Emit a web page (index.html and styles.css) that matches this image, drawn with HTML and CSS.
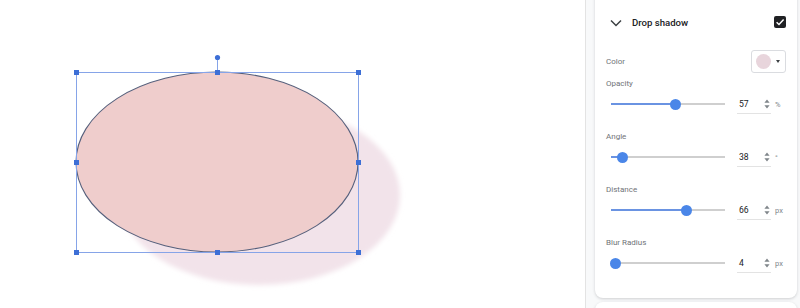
FILE: index.html
```html
<!DOCTYPE html>
<html>
<head>
<meta charset="utf-8">
<link rel="stylesheet" href="styles.css">
</head>
<body>
<div class="app">
  <div class="canvas">
    <svg class="stage" width="585" height="308" viewBox="0 0 585 308">
      <defs>
        <filter id="blur" x="-20%" y="-20%" width="140%" height="140%">
          <feGaussianBlur stdDeviation="2.5"/>
        </filter>
      </defs>
      <ellipse cx="259" cy="195" rx="141" ry="90" fill="#f2e3ea" filter="url(#blur)"/>
      <ellipse cx="217" cy="162" rx="141" ry="90" fill="#efcdcc" stroke="#56607c" stroke-width="1.1"/>
      <rect x="76.5" y="72.5" width="282" height="180" fill="none" stroke="#86a4e8" stroke-width="1"/>
      <line x1="217.5" y1="57" x2="217.5" y2="72" stroke="#86a4e8" stroke-width="1"/>
      <circle cx="217.5" cy="57.5" r="2.6" fill="#3d6fd6"/>
      <g fill="#3d6fd6">
        <rect x="74" y="70" width="5" height="5"/>
        <rect x="215" y="70" width="5" height="5"/>
        <rect x="356" y="70" width="5" height="5"/>
        <rect x="74" y="160" width="5" height="5"/>
        <rect x="356" y="160" width="5" height="5"/>
        <rect x="74" y="250" width="5" height="5"/>
        <rect x="215" y="250" width="5" height="5"/>
        <rect x="356" y="250" width="5" height="5"/>
      </g>
    </svg>
  </div>
  <div class="panel">
    <div class="card">
      <div class="header">
        <svg class="chevron" width="12" height="8" viewBox="0 0 12 8"><path d="M1 1.5 L6 6.5 L11 1.5" fill="none" stroke="#3c4043" stroke-width="1.5"/></svg>
        <span class="title">Drop shadow</span>
        <span class="checkbox"><svg width="12" height="12" viewBox="0 0 12 12"><path d="M2.6 6.2 L5 8.5 L9.6 3.6" fill="none" stroke="#ffffff" stroke-width="1.5"/></svg></span>
      </div>
      <div class="color-row">
        <span class="label">Color</span>
        <span class="color-btn"><span class="swatch"></span><span class="caret"></span></span>
      </div>

      <div class="group">
        <div class="label">Opacity</div>
        <div class="ctrl">
          <div class="slider"><div class="track"></div><div class="fill" style="width:57%"></div><div class="thumb" style="left:57%"></div></div>
          <div class="num"><span>57</span><svg class="spin" width="6" height="10" viewBox="0 0 6 10"><path d="M3 0.5 L5.6 3.8 L0.4 3.8 Z M3 9.5 L5.6 6.2 L0.4 6.2 Z" fill="#80868b"/></svg></div>
          <span class="unit">%</span>
        </div>
      </div>

      <div class="group">
        <div class="label">Angle</div>
        <div class="ctrl">
          <div class="slider"><div class="track"></div><div class="fill" style="width:10.5%"></div><div class="thumb" style="left:10.5%"></div></div>
          <div class="num"><span>38</span><svg class="spin" width="6" height="10" viewBox="0 0 6 10"><path d="M3 0.5 L5.6 3.8 L0.4 3.8 Z M3 9.5 L5.6 6.2 L0.4 6.2 Z" fill="#80868b"/></svg></div>
          <span class="unit">°</span>
        </div>
      </div>

      <div class="group">
        <div class="label">Distance</div>
        <div class="ctrl">
          <div class="slider"><div class="track"></div><div class="fill" style="width:66%"></div><div class="thumb" style="left:66%"></div></div>
          <div class="num"><span>66</span><svg class="spin" width="6" height="10" viewBox="0 0 6 10"><path d="M3 0.5 L5.6 3.8 L0.4 3.8 Z M3 9.5 L5.6 6.2 L0.4 6.2 Z" fill="#80868b"/></svg></div>
          <span class="unit">px</span>
        </div>
      </div>

      <div class="group">
        <div class="label">Blur Radius</div>
        <div class="ctrl">
          <div class="slider"><div class="track"></div><div class="fill" style="width:4%"></div><div class="thumb" style="left:4%"></div></div>
          <div class="num"><span>4</span><svg class="spin" width="6" height="10" viewBox="0 0 6 10"><path d="M3 0.5 L5.6 3.8 L0.4 3.8 Z M3 9.5 L5.6 6.2 L0.4 6.2 Z" fill="#80868b"/></svg></div>
          <span class="unit">px</span>
        </div>
      </div>
    </div>
    <div class="card next"></div>
  </div>
</div>
</body>
</html>
```
FILE: styles.css
```css
html, body {
  margin: 0;
  padding: 0;
  width: 800px;
  height: 308px;
  overflow: hidden;
  background: #ffffff;
  font-family: Roboto, "Liberation Sans", sans-serif;
}

.app {
  display: flex;
  width: 800px;
  height: 308px;
}

.canvas {
  width: 585px;
  height: 308px;
  background: #ffffff;
  border-right: 1px solid #e3e3e3;
  flex: none;
}

.stage {
  display: block;
}

.panel {
  flex: 1;
  background: #f8f9fa;
  padding: 0 3px 0 9px;
  display: flex;
  flex-direction: column;
  gap: 4px;
  overflow: hidden;
}

.card {
  background: #ffffff;
  border-radius: 8px;
  box-shadow: 0 1px 3px rgba(60, 64, 67, 0.22);
  margin-top: -10px;
  padding: 10px 11px 25px 11px;
  flex: none;
}

.card.next {
  margin-top: 0;
  height: 40px;
  padding: 0;
}

.header {
  height: 44px;
  display: flex;
  align-items: center;
  padding-left: 4px;
}

.chevron {
  display: block;
  margin-right: 10px;
  margin-top: 1px;
}

.title {
  font-size: 9.6px;
  font-weight: 500;
  color: #202124;
  flex: 1;
}

.checkbox {
  width: 12px;
  height: 12px;
  background: #202124;
  border-radius: 2px;
  display: flex;
  align-items: center;
  justify-content: center;
}

.checkbox svg {
  display: block;
}

.color-row {
  margin-top: 6px;
  height: 23px;
  display: flex;
  align-items: center;
  justify-content: space-between;
}

.label {
  font-size: 8px;
  line-height: 14px;
  color: #6f7378;
}

.color-btn {
  height: 21px;
  border: 1px solid #dadce0;
  border-radius: 3px;
  display: flex;
  align-items: center;
  padding-left: 4px;
  box-sizing: content-box;
  width: 29px;
}

.swatch {
  width: 15px;
  height: 15px;
  border-radius: 50%;
  background: #e8d5dc;
}

.caret {
  width: 0;
  height: 0;
  border-left: 2.5px solid transparent;
  border-right: 2.5px solid transparent;
  border-top: 3px solid #3c4043;
  margin-left: 5px;
}

.group {
  margin-top: 16px;
}

.color-row + .group {
  margin-top: 4px;
}

.ctrl {
  margin-top: 3px;
  height: 20px;
  display: flex;
  align-items: center;
}

.slider {
  position: relative;
  width: 114px;
  height: 20px;
  margin-left: 5px;
}

.track {
  position: absolute;
  left: 0;
  right: 0;
  top: 9px;
  height: 2px;
  background: #cfcfcf;
}

.fill {
  position: absolute;
  left: 0;
  top: 9px;
  height: 2px;
  background: #6a93e2;
}

.thumb {
  position: absolute;
  top: 4.5px;
  width: 11px;
  height: 11px;
  margin-left: -5.5px;
  border-radius: 50%;
  background: #4a86e8;
}

.num {
  margin-left: 12px;
  width: 34px;
  height: 19px;
  box-sizing: border-box;
  border-bottom: 1px solid #e3e3e3;
  display: flex;
  align-items: center;
  justify-content: space-between;
  padding: 0 1px 0 2px;
  font-size: 8.6px;
  color: #202124;
}

.spin {
  display: block;
  margin-top: 1px;
}

.unit {
  margin-left: 4px;
  font-size: 7.5px;
  color: #80868b;
}
```
